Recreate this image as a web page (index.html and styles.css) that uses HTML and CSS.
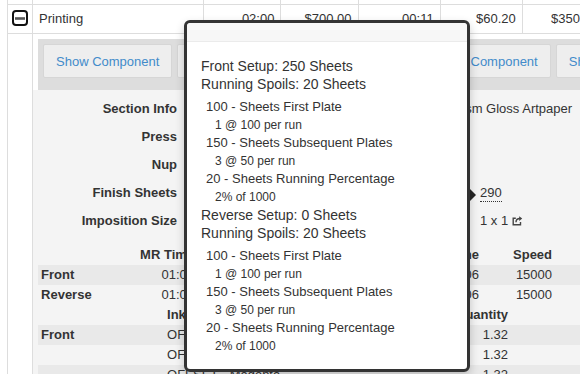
FILE: index.html
```html
<!DOCTYPE html>
<html>
<head>
<meta charset="utf-8">
<title>Job Operations</title>
<link rel="stylesheet" href="styles.css">
</head>
<body>
<div class="page">
  <table class="jobs">
    <colgroup>
      <col class="c-toggle"><col class="c-name"><col class="c-num"><col class="c-num"><col class="c-num2"><col class="c-num2"><col class="c-num2">
    </colgroup>
    <tr class="prev">
      <td></td><td></td><td></td><td></td><td></td><td></td><td></td>
    </tr>
    <tr class="op">
      <td class="toggle">
        <svg class="minus" width="16" height="16" viewBox="0 0 16 16"><rect x="1" y="1" width="14" height="14" rx="3" fill="#fff" stroke="#111" stroke-width="2"/><rect x="3" y="7.2" width="10" height="2.6" fill="#555"/></svg>
      </td>
      <td>Printing</td>
      <td class="num">02:00</td>
      <td class="num">$700.00</td>
      <td class="num">00:11</td>
      <td class="num">$60.20</td>
      <td class="num">$350.00</td>
    </tr>
    <tr class="detail">
      <td class="spacer"></td>
      <td colspan="6" class="detail-cell">
        <div class="toolbar-wrap">
          <div class="toolbar">
            <button class="btn">Show Component</button>
            <button class="btn btn-wide">Show Calculation Breakdown</button>
            <button class="btn">Show Component</button>
            <button class="btn">Show Calculation</button>
          </div>
        </div>
        <div class="details">
          <div class="info">
            <div class="lbl">Section Info</div>
            <div class="val span">Text 1 - 640 x 900mm - 4 Colours - 16pp - 150gsm Gloss Artpaper</div>
            <div class="lbl">Press</div>
            <div class="val">Heidelberg SM 102</div>
            <div class="val"></div>
            <div class="lbl">Nup</div>
            <div class="val">4</div>
            <div class="val"></div>
            <div class="lbl">Finish Sheets</div>
            <div class="val">250</div>
            <div class="val"><span class="hint">290</span></div>
            <div class="lbl">Imposition Size</div>
            <div class="val">640 x 900mm</div>
            <div class="val">1 x 1 <svg class="share" width="11" height="11" viewBox="0 0 11 11"><path d="M8.5 7v2.8H1.2V3.2H3.8" fill="none" stroke="#444" stroke-width="1.4"/><path d="M4 7.2C4 4.6 5.6 3.6 8.2 3.6" fill="none" stroke="#444" stroke-width="1.5"/><path d="M7.2 1.2L10.2 3.6 7.2 6Z" fill="#444"/></svg></div>
          </div>
          <table class="sub sub-times">
            <colgroup><col class="t1a"><col class="t1b"><col class="t1c"><col class="t1d"><col class="t1e"><col class="t1f"><col></colgroup>
            <tr class="head"><td></td><td class="r">MR Time</td><td class="r">MR Cost</td><td class="r">Run Sheets</td><td class="r">Run Time</td><td class="r">Speed</td><td></td></tr>
            <tr class="stripe"><td>Front</td><td class="r">01:00</td><td class="r">$60.00</td><td class="r">1270</td><td class="r">00:06</td><td class="r">15000</td><td></td></tr>
            <tr><td>Reverse</td><td class="r">01:00</td><td class="r">$60.00</td><td class="r">1270</td><td class="r">00:06</td><td class="r">15000</td><td></td></tr>
          </table>
          <table class="sub sub-inks">
            <colgroup><col class="t2a"><col class="t2b"><col class="t2c"><col></colgroup>
            <tr class="head"><td></td><td>Ink</td><td class="r">Quantity</td><td></td></tr>
            <tr class="stripe"><td>Front</td><td>OFFSET - Cyan</td><td class="r">1.32</td><td></td></tr>
            <tr><td></td><td>OFFSET - Yellow</td><td class="r">1.32</td><td></td></tr>
            <tr class="stripe"><td></td><td>OFFSET - Magenta</td><td class="r">1.32</td><td></td></tr>
          </table>
        </div>
      </td>
    </tr>
  </table>

  <div class="popover">
    <div class="popover-title"></div>
    <div class="popover-content">
      <div class="setup">Front Setup: 250 Sheets</div>
      <div class="setup">Running Spoils: 20 Sheets</div>
      <ul class="spoils">
        <li><div class="item">100 - Sheets First Plate</div><div class="sub-line">1 @ 100 per run</div></li>
        <li><div class="item">150 - Sheets Subsequent Plates</div><div class="sub-line">3 @ 50 per run</div></li>
        <li><div class="item">20 - Sheets Running Percentage</div><div class="sub-line">2% of 1000</div></li>
      </ul>
      <div class="setup">Reverse Setup: 0 Sheets</div>
      <div class="setup">Running Spoils: 20 Sheets</div>
      <ul class="spoils">
        <li><div class="item">100 - Sheets First Plate</div><div class="sub-line">1 @ 100 per run</div></li>
        <li><div class="item">150 - Sheets Subsequent Plates</div><div class="sub-line">3 @ 50 per run</div></li>
        <li><div class="item">20 - Sheets Running Percentage</div><div class="sub-line">2% of 1000</div></li>
      </ul>
    </div>
    <div class="arrow"></div>
  </div>
</div>
</body>
</html>
```

FILE: styles.css
```css
html, body {
  margin: 0;
  padding: 0;
  overflow: hidden;
  background: #fff;
}
body {
  width: 580px;
  height: 374px;
  font-family: "Liberation Sans", Arial, sans-serif;
  font-size: 13px;
  color: #333;
}
.page {
  position: relative;
  padding-left: 7px;
  height: 374px;
}

/* main operations table */
.jobs {
  border-collapse: collapse;
  table-layout: fixed;
  width: 598px;
}
.c-toggle { width: 25px; }
.c-name { width: 171px; }
.c-num { width: 77px; }
.c-num2 { width: 82px; }
.jobs > tbody > tr > td {
  border: 1px solid #ddd;
  padding: 5px 6px;
  line-height: 18px;
  vertical-align: middle;
}
.jobs > tbody > tr.prev > td {
  border-top: none;
  height: 4px;
  padding: 0;
}
.jobs td.num { text-align: right; }
.jobs td.toggle {
  padding: 5px 0 0;
  text-align: center;
  vertical-align: top;
}
.minus { display: block; margin: 0 auto; }
.jobs > tbody > tr.detail > td.detail-cell {
  padding: 0;
  vertical-align: top;
}

/* toolbar */
.toolbar-wrap { padding: 5px 0 0 5px; }
.toolbar {
  display: flex;
  gap: 5px;
  background: #ddd;
  padding: 5px 5px 12px;
  white-space: nowrap;
}
.btn {
  flex: none;
  height: 34px;
  padding: 0 12px;
  background: #eee;
  border: 1px solid #d6d6d6;
  border-radius: 2px;
  font-family: "Liberation Sans", Arial, sans-serif;
  font-size: 13px;
  color: #428bca;
}
.btn-wide { width: 239px; }

/* details panel */
.details {
  background: #f4f4f4;
  padding: 5px 0 40px 5px;
}
.info {
  display: grid;
  grid-template-columns: 149px 283px auto;
  column-gap: 5px;
  grid-auto-rows: 28px;
  align-items: center;
  white-space: nowrap;
}
.lbl {
  font-weight: bold;
  text-align: right;
  padding-right: 10px;
}
.val.span { grid-column: 2 / 4; }
.hint {
  border-bottom: 1px dotted #333;
  padding-bottom: 1px;
}
.share { vertical-align: -1px; }

.sub {
  border-collapse: collapse;
  table-layout: fixed;
  width: 562px;
}
.sub-times { margin-top: 10px; }
.sub td {
  padding: 0 3px;
  height: 20px;
  line-height: 20px;
  white-space: nowrap;
  overflow: hidden;
}
.sub td.r { text-align: right; }
.sub tr.head td { font-weight: bold; }
.sub tr.stripe td { background: #e9e9e9; }
.sub tr td:first-child { font-weight: bold; }
.t1a { width: 92px; }
.t1b { width: 67px; }
.t1c { width: 93px; }
.t1d { width: 110px; }
.t1e { width: 82px; }
.t1f { width: 73px; }
.t2a { width: 126px; }
.t2b { width: 216px; }
.t2c { width: 131px; }

/* popover */
.popover {
  position: absolute;
  left: 184px;
  top: 20px;
  width: 286px;
  height: 352px;
  box-sizing: border-box;
  background: #fff;
  border: 3px solid #333;
  border-radius: 6px;
  box-shadow: 0 4px 10px rgba(0, 0, 0, 0.2);
}
.popover-title {
  height: 18px;
  background: #f7f7f7;
  border-bottom: 1px solid #ebebeb;
  border-radius: 4px 4px 0 0;
}
.popover-content {
  padding: 15px 14px 0;
}
.setup {
  font-size: 14px;
  line-height: 18px;
}
.spoils {
  list-style: none;
  margin: 5px 0 0;
  padding: 0;
}
.spoils .item {
  font-size: 13px;
  line-height: 18.57px;
  padding-left: 5px;
}
.spoils .sub-line {
  font-size: 12px;
  line-height: 17.5px;
  padding-left: 14px;
}
.arrow {
  position: absolute;
  right: -9px;
  top: 166px;
  width: 0;
  height: 0;
  border-top: 6px solid transparent;
  border-bottom: 6px solid transparent;
  border-left: 6px solid #222;
}
```
